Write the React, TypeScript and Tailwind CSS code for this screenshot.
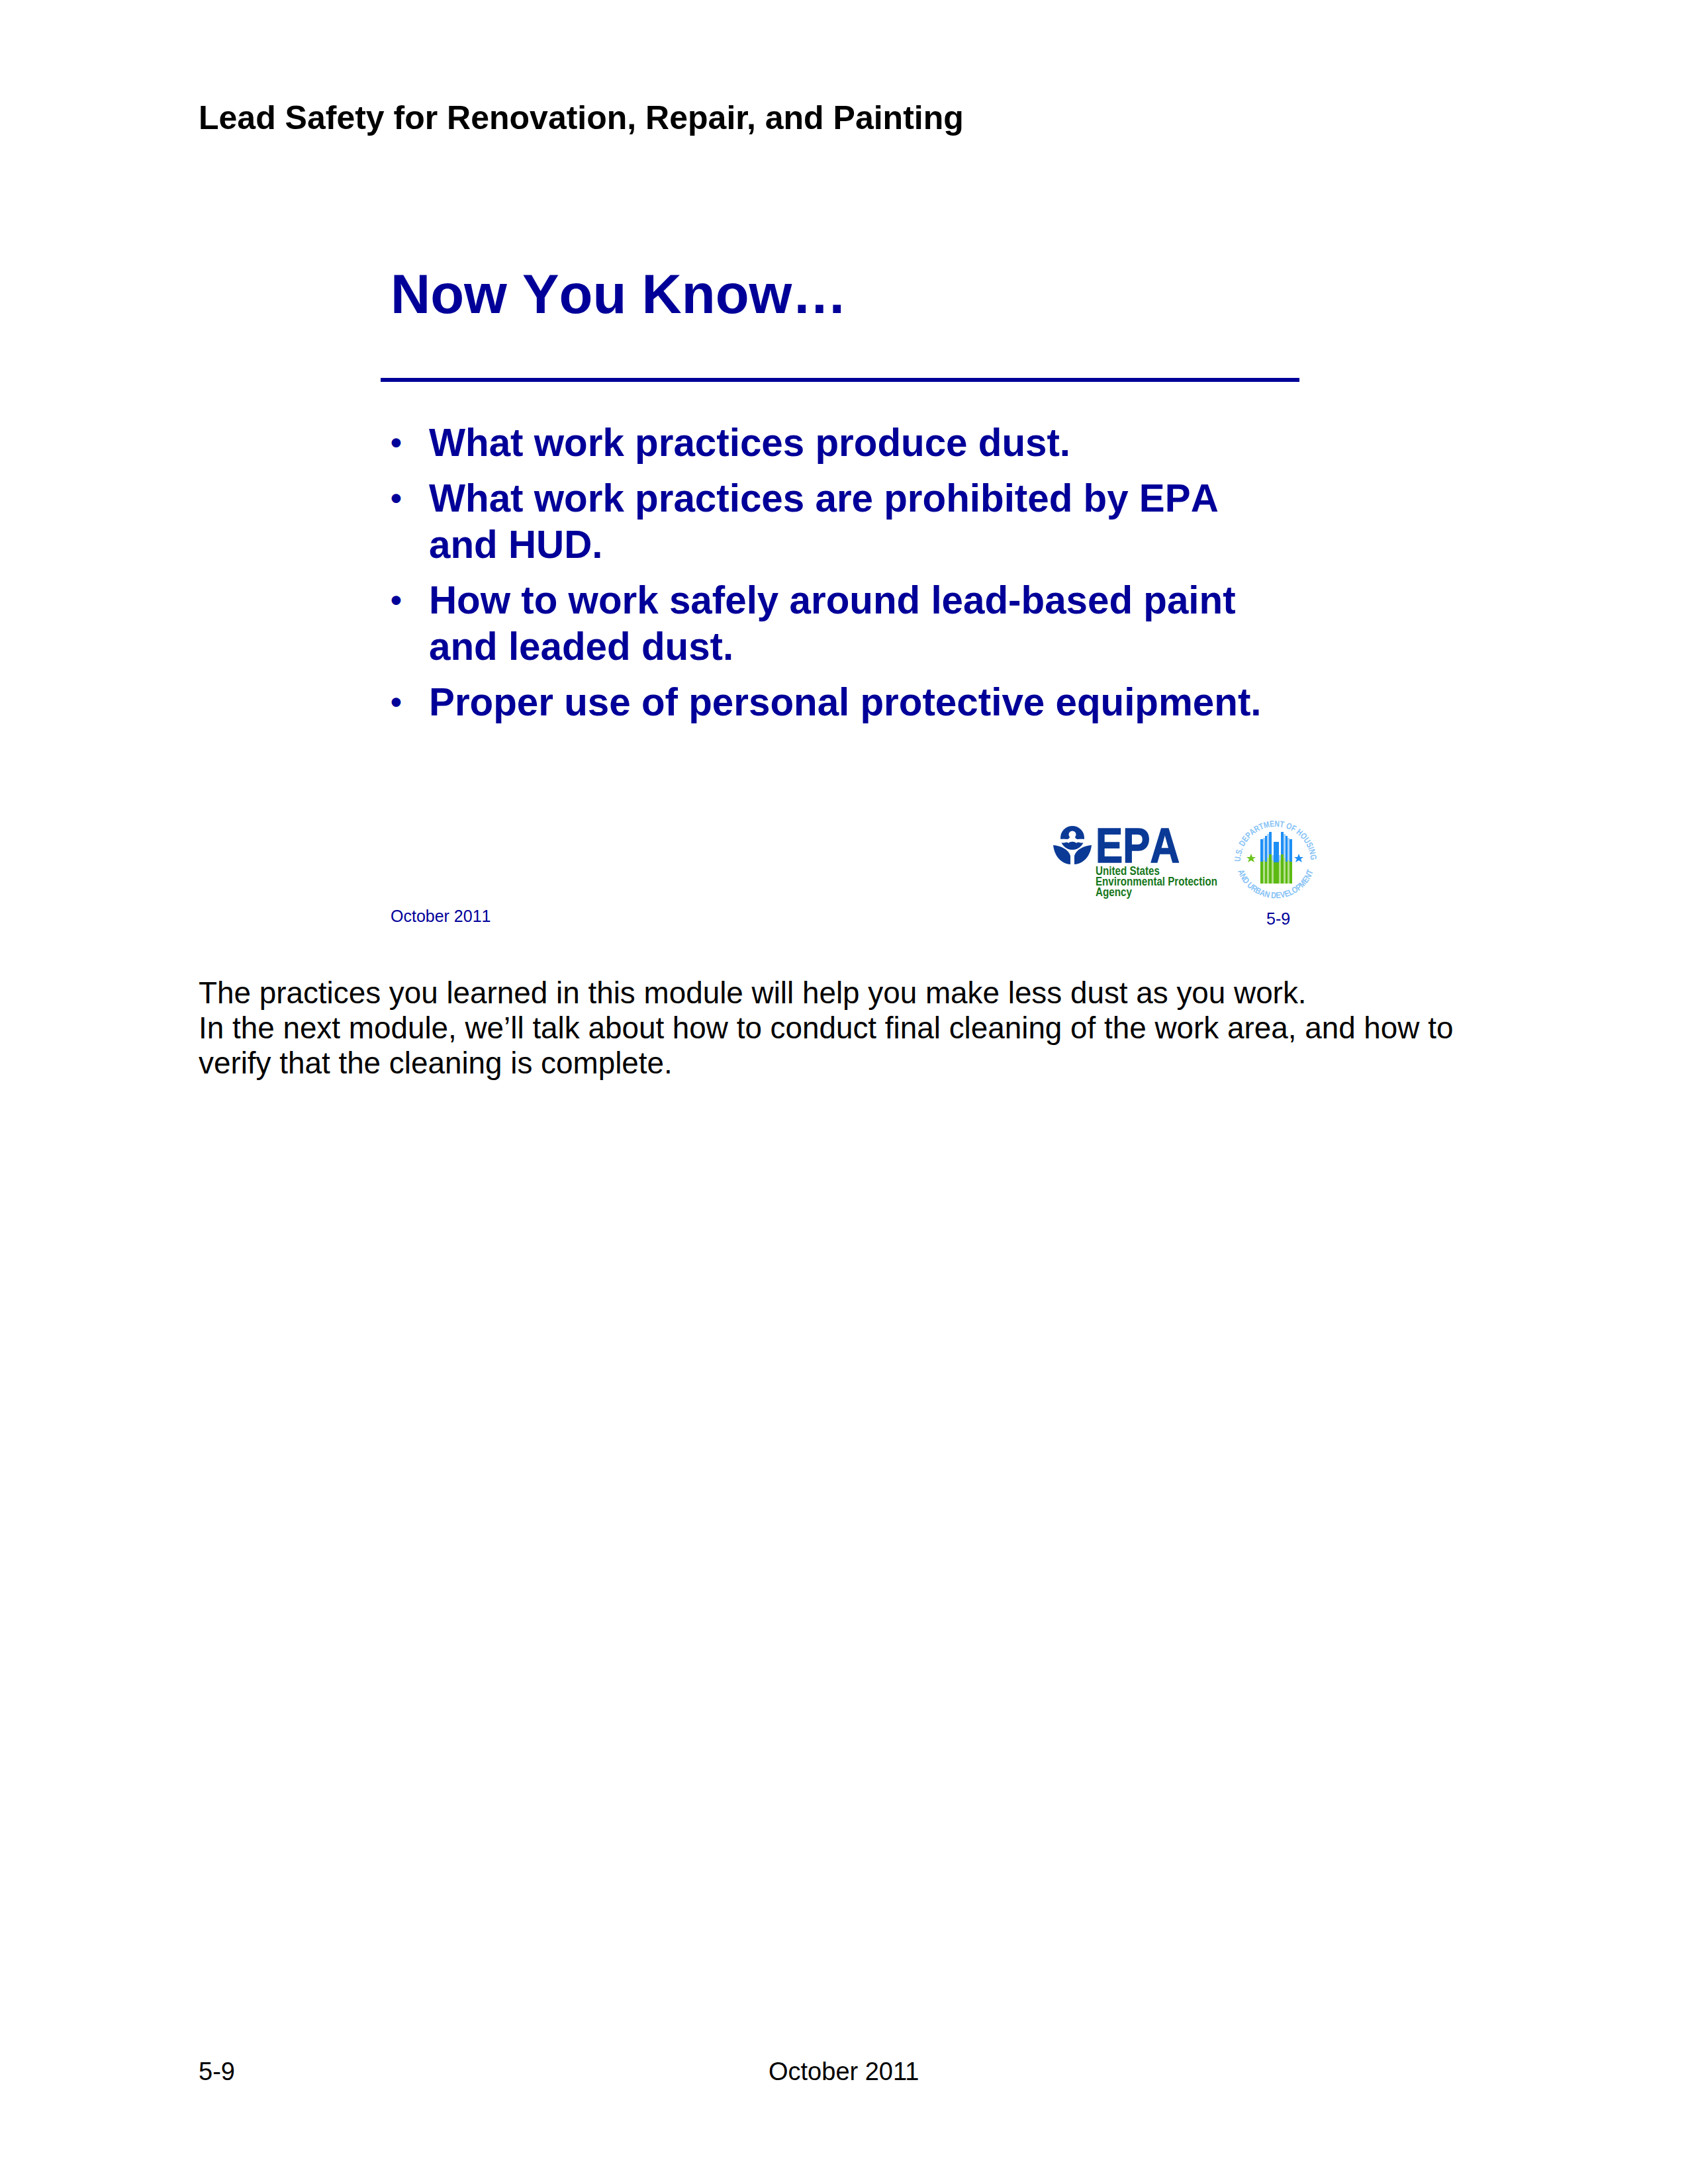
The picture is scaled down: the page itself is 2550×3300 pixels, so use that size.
import React from 'react'

const bullets = [
  ['What work practices produce dust.'],
  ['What work practices are prohibited by EPA', 'and HUD.'],
  ['How to work safely around lead-based paint', 'and leaded dust.'],
  ['Proper use of personal protective equipment.'],
]

function EpaLogo() {
  return (
    <svg width="260" height="125" viewBox="0 0 260 125">
      <circle cx="35" cy="26" r="18" fill="#0b3a96" />
      <circle cx="35" cy="21" r="5.5" fill="#ffffff" />
      <path d="M17 28 C24 27 29 30 31 25 L39 25 C41 30 46 27 53 28 L53 33 C47 35 44 31 41 34 C38 31 32 31 29 34 C26 31 23 35 17 33 Z" fill="#ffffff" />
      <path d="M6 37 C17 38 29 43 32 53 L32 66 C18 65 8 54 6 37 Z" fill="#0b3a96" />
      <path d="M64 37 C53 38 41 43 38 53 L38 66 C52 65 62 54 64 37 Z" fill="#0b3a96" />
      <text x="70" y="63" fontFamily="'Liberation Sans', sans-serif" fontWeight="700" fontSize="75" textLength="127" lengthAdjust="spacingAndGlyphs" fill="#0b3a96" stroke="#0b3a96" strokeWidth="1.5">EPA</text>
      <g fontFamily="'Liberation Sans', sans-serif" fontWeight="700" fontSize="18" fill="#16771c">
        <text x="70" y="82" textLength="97" lengthAdjust="spacingAndGlyphs">United States</text>
        <text x="70" y="98" textLength="184" lengthAdjust="spacingAndGlyphs">Environmental Protection</text>
        <text x="70" y="114" textLength="55" lengthAdjust="spacingAndGlyphs">Agency</text>
      </g>
    </svg>
  )
}

// building stripes: x, width, top of blue, top of green, shade
const stripes = [
  [44, 4, 38, 72, 0],
  [48, 3, 36, 70, 1],
  [51, 3, 33, 72, 0],
  [54, 3, 30, 66, 1],
  [57, 4, 27, 61, 0],
  [61, 3, 62, 70, 1],
  [64, 8, 42, 73, 0],
  [72, 3, 62, 70, 1],
  [75, 4, 27, 61, 0],
  [79, 3, 30, 66, 1],
  [82, 3, 33, 72, 0],
  [85, 3, 36, 70, 1],
  [88, 4, 38, 72, 0],
]

function HudLogo() {
  return (
    <svg width="135" height="135" viewBox="0 0 135 135">
      <defs>
        <path id="hud-top" d="M14 72 A53 53 0 1 1 120 72" />
        <path id="hud-bottom" d="M10 86 A60 60 0 0 0 124 86" />
      </defs>
      <g fontFamily="'Liberation Sans', sans-serif" fontWeight="700" fontSize="13" fill="#86c2f6">
        <text>
          <textPath href="#hud-top" textLength="164" lengthAdjust="spacingAndGlyphs">U.S. DEPARTMENT OF HOUSING</textPath>
        </text>
        <text>
          <textPath href="#hud-bottom" textLength="150" lengthAdjust="spacingAndGlyphs">AND URBAN DEVELOPMENT</textPath>
        </text>
      </g>
      {stripes.map(([x, w, blue, green, light]) => (
        <g key={x}>
          <rect x={x} y={blue} width={w} height={green - blue} fill={light ? '#a9d4fb' : '#1e8ff5'} />
          <rect x={x} y={green} width={w} height={105 - green} fill={light ? '#b4e08c' : '#5cba12'} />
        </g>
      ))}
      <path d="M30 60 L32 65 L37 65 L33 68 L35 73 L30 70 L25 73 L27 68 L23 65 L28 65 Z" fill="#6cc41e" />
      <path d="M102 60 L104 65 L109 65 L105 68 L107 73 L102 70 L97 73 L99 68 L95 65 L100 65 Z" fill="#1e8ff5" />
    </svg>
  )
}

export default function App() {
  return (
    <div className="flex h-[3300px] w-[2550px] flex-col bg-white pl-[300px] pr-[300px] pt-[150px] pb-[147px] font-['Liberation_Sans',Arial,sans-serif] text-black">
      <h1 className="text-[50px] font-bold leading-[56px]">Lead Safety for Renovation, Repair, and Painting</h1>

      <section className="ml-[275px] mt-[189px] w-[1420px] text-[#000099] [font-kerning:none]">
        <h2 className="pl-[15px] text-[83.33px] font-bold leading-[100px]">Now You Know…</h2>
        <div className="mt-[76px] h-[6px] w-[1388px] bg-[#000099]" />
        <ul className="mt-[57px] flex flex-col gap-[14px] pl-[15px]">
          {bullets.map((lines) => (
            <li className="flex text-[58.33px] font-bold leading-[70px]" key={lines[0]}>
              <span className="w-[58px] shrink-0 text-[48px]">•</span>
              <div>
                {lines.map((line) => (
                  <div key={line}>{line}</div>
                ))}
              </div>
            </li>
          ))}
        </ul>
        <div className="mt-[144px] flex items-end">
          <span className="mb-[4px] w-[1010px] pl-[15px] text-[25px] leading-[30px]">October 2011</span>
          <div className="flex flex-col">
            <div className="flex">
              <EpaLogo />
              <div className="-mt-[10px] ml-[15px]">
                <HudLogo />
              </div>
            </div>
            <span className="ml-[328px] mt-[8px] text-[25px] leading-[30px]">5-9</span>
          </div>
        </div>
      </section>

      <div className="mt-[71px] text-[45.83px] leading-[53px]">
        <p>The practices you learned in this module will help you make less dust as you work.</p>
        <p>In the next module, we’ll talk about how to conduct final cleaning of the work area, and how to verify that the cleaning is complete.</p>
      </div>

      <footer className="relative mt-auto text-[38px] leading-[46px]">
        <span>5-9</span>
        <span className="absolute left-[861px] top-0">October 2011</span>
      </footer>
    </div>
  )
}
